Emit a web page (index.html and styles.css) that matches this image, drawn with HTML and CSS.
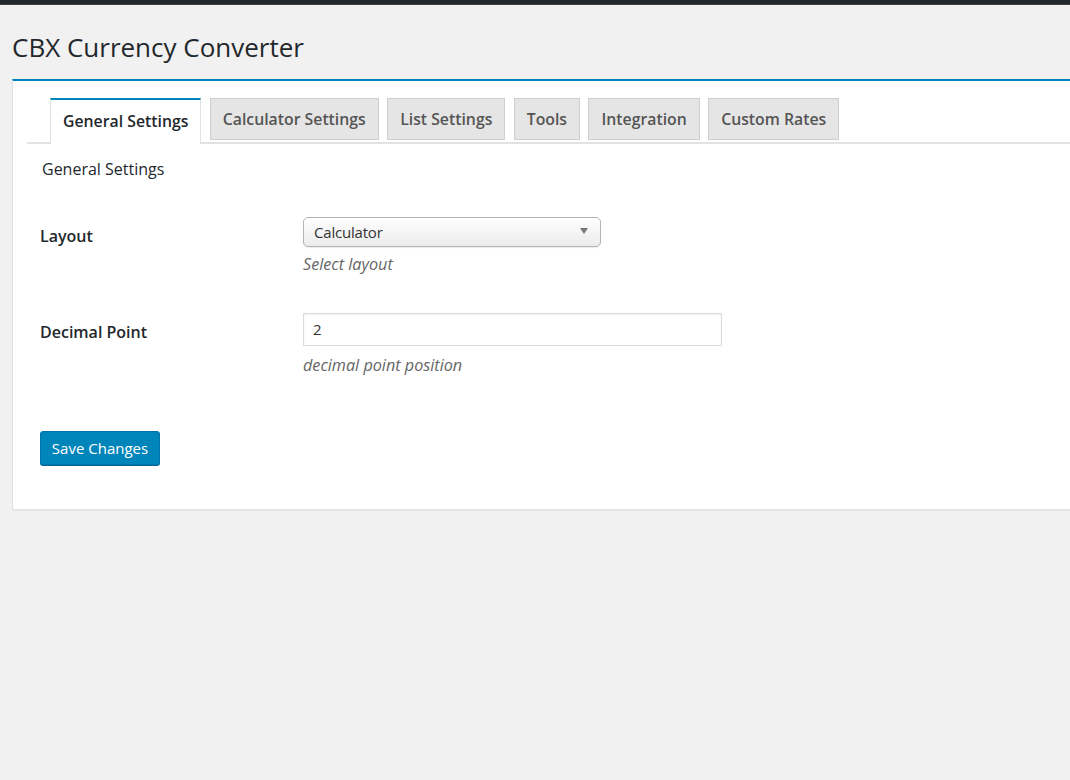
FILE: index.html
```html
<!DOCTYPE html>
<html>
<head>
<meta charset="utf-8">
<link rel="stylesheet" href="styles.css">
</head>
<body>
<div class="adminbar"></div>
<div class="wrap">
  <h1 class="page-title">CBX Currency Converter</h1>
  <div class="panel">
    <div class="nav-tabs">
      <a class="nav-tab active">General Settings</a>
      <a class="nav-tab">Calculator Settings</a>
      <a class="nav-tab">List Settings</a>
      <a class="nav-tab">Tools</a>
      <a class="nav-tab">Integration</a>
      <a class="nav-tab">Custom Rates</a>
    </div>
    <div class="section">
      <h2 class="section-title">General Settings</h2>
      <div class="form-row">
        <div class="label">Layout</div>
        <div class="field">
          <div class="select"><span>Calculator</span><span class="arrow"></span></div>
          <p class="desc">Select layout</p>
        </div>
      </div>
      <div class="form-row row2">
        <div class="label">Decimal Point</div>
        <div class="field">
          <div class="input">2</div>
          <p class="desc">decimal point position</p>
        </div>
      </div>
      <div class="submit">
        <button class="button-primary">Save Changes</button>
      </div>
    </div>
  </div>
</div>
</body>
</html>
```

FILE: styles.css
```css
html, body {
  margin: 0;
  padding: 0;
  background: #f1f1f1;
  overflow: hidden;
  height: 780px;
  font-family: "Open Sans", "Noto Sans", sans-serif;
  color: #23282d;
}
.adminbar {
  height: 4px;
  background: #23282d;
  border-bottom: 1px solid #3a3f44;
}
.wrap {
  padding-left: 12px;
}
.page-title {
  margin: 0;
  padding-top: 26px;
  font-size: 26px;
  font-weight: 400;
  line-height: 32px;
  height: 48px;
}
.panel {
  background: #fff;
  border-top: 2px solid #0085ba;
  border-left: 1px solid #e2e2e2;
  border-bottom: 1px solid #e2e2e2;
  box-shadow: 0 1px 1px rgba(0,0,0,0.04);
  margin-right: -20px;
  height: 428px;
}
.nav-tabs {
  display: flex;
  margin-left: 14px;
  padding-top: 17px;
  border-bottom: 2px solid #e2e2e2;
  height: 44px;
  box-sizing: content-box;
  align-items: flex-start;
}
.nav-tab {
  display: block;
  box-sizing: border-box;
  height: 42px;
  margin-left: 8.4px;
  padding: 0 12px;
  border: 1px solid #cfcfcf;
  background: #e5e5e5;
  color: #555;
  font-size: 15.8px;
  font-weight: 600;
  line-height: 40px;
  white-space: nowrap;
}
.nav-tab:first-child {
  margin-left: 23px;
}
.nav-tab.active {
  background: #fff;
  color: #23282d;
  border-color: #e2e2e2;
  border-top: 2px solid #0085ba;
  border-bottom: none;
  height: 46px;
  line-height: 42px;
}
.section {
  padding-left: 27px;
}
.section-title {
  margin: 0;
  padding-top: 14px;
  padding-left: 2px;
  font-size: 16px;
  font-weight: 400;
  line-height: 22px;
}
.form-row {
  display: flex;
  margin-top: 37px;
}
.row2 {
  margin-top: 38px;
}
.label {
  width: 263px;
  font-size: 16px;
  font-weight: 600;
  line-height: 22px;
  padding-top: 8px;
}
.field {
  display: flex;
  flex-direction: column;
}
.select {
  box-sizing: border-box;
  width: 298px;
  height: 30px;
  border: 1px solid #b4b4b4;
  border-radius: 5px;
  background: linear-gradient(#fefefe, #ececec);
  box-shadow: 0 1px 1px rgba(0,0,0,0.08);
  display: flex;
  align-items: center;
  justify-content: space-between;
  padding: 0 12px 0 10px;
  font-size: 15px;
  letter-spacing: -0.2px;
  color: #333;
}
.arrow {
  width: 0;
  height: 0;
  border-left: 4px solid transparent;
  border-right: 4px solid transparent;
  border-top: 6px solid #777;
  margin-top: -2px;
}
.input {
  box-sizing: border-box;
  width: 419px;
  height: 33px;
  border: 1px solid #dcdcdc;
  box-shadow: inset 0 1px 2px rgba(0,0,0,0.07);
  padding: 0 9px;
  font-size: 15px;
  line-height: 31px;
  color: #333;
}
.desc {
  margin: 6px 0 0;
  font-size: 16.2px;
  font-style: italic;
  line-height: 22px;
  color: #666;
}
.row2 .desc {
  margin-top: 8px;
}
.submit {
  padding-top: 55px;
}
.button-primary {
  box-sizing: border-box;
  width: 120px;
  height: 34px;
  background: #0085ba;
  border: 1px solid #0073aa;
  border-radius: 3px;
  box-shadow: 0 1px 0 #006799;
  color: #fff;
  font-family: "Open Sans", "Noto Sans", sans-serif;
  font-size: 15px;
  padding: 0;
  margin-left: 0;
}
```
